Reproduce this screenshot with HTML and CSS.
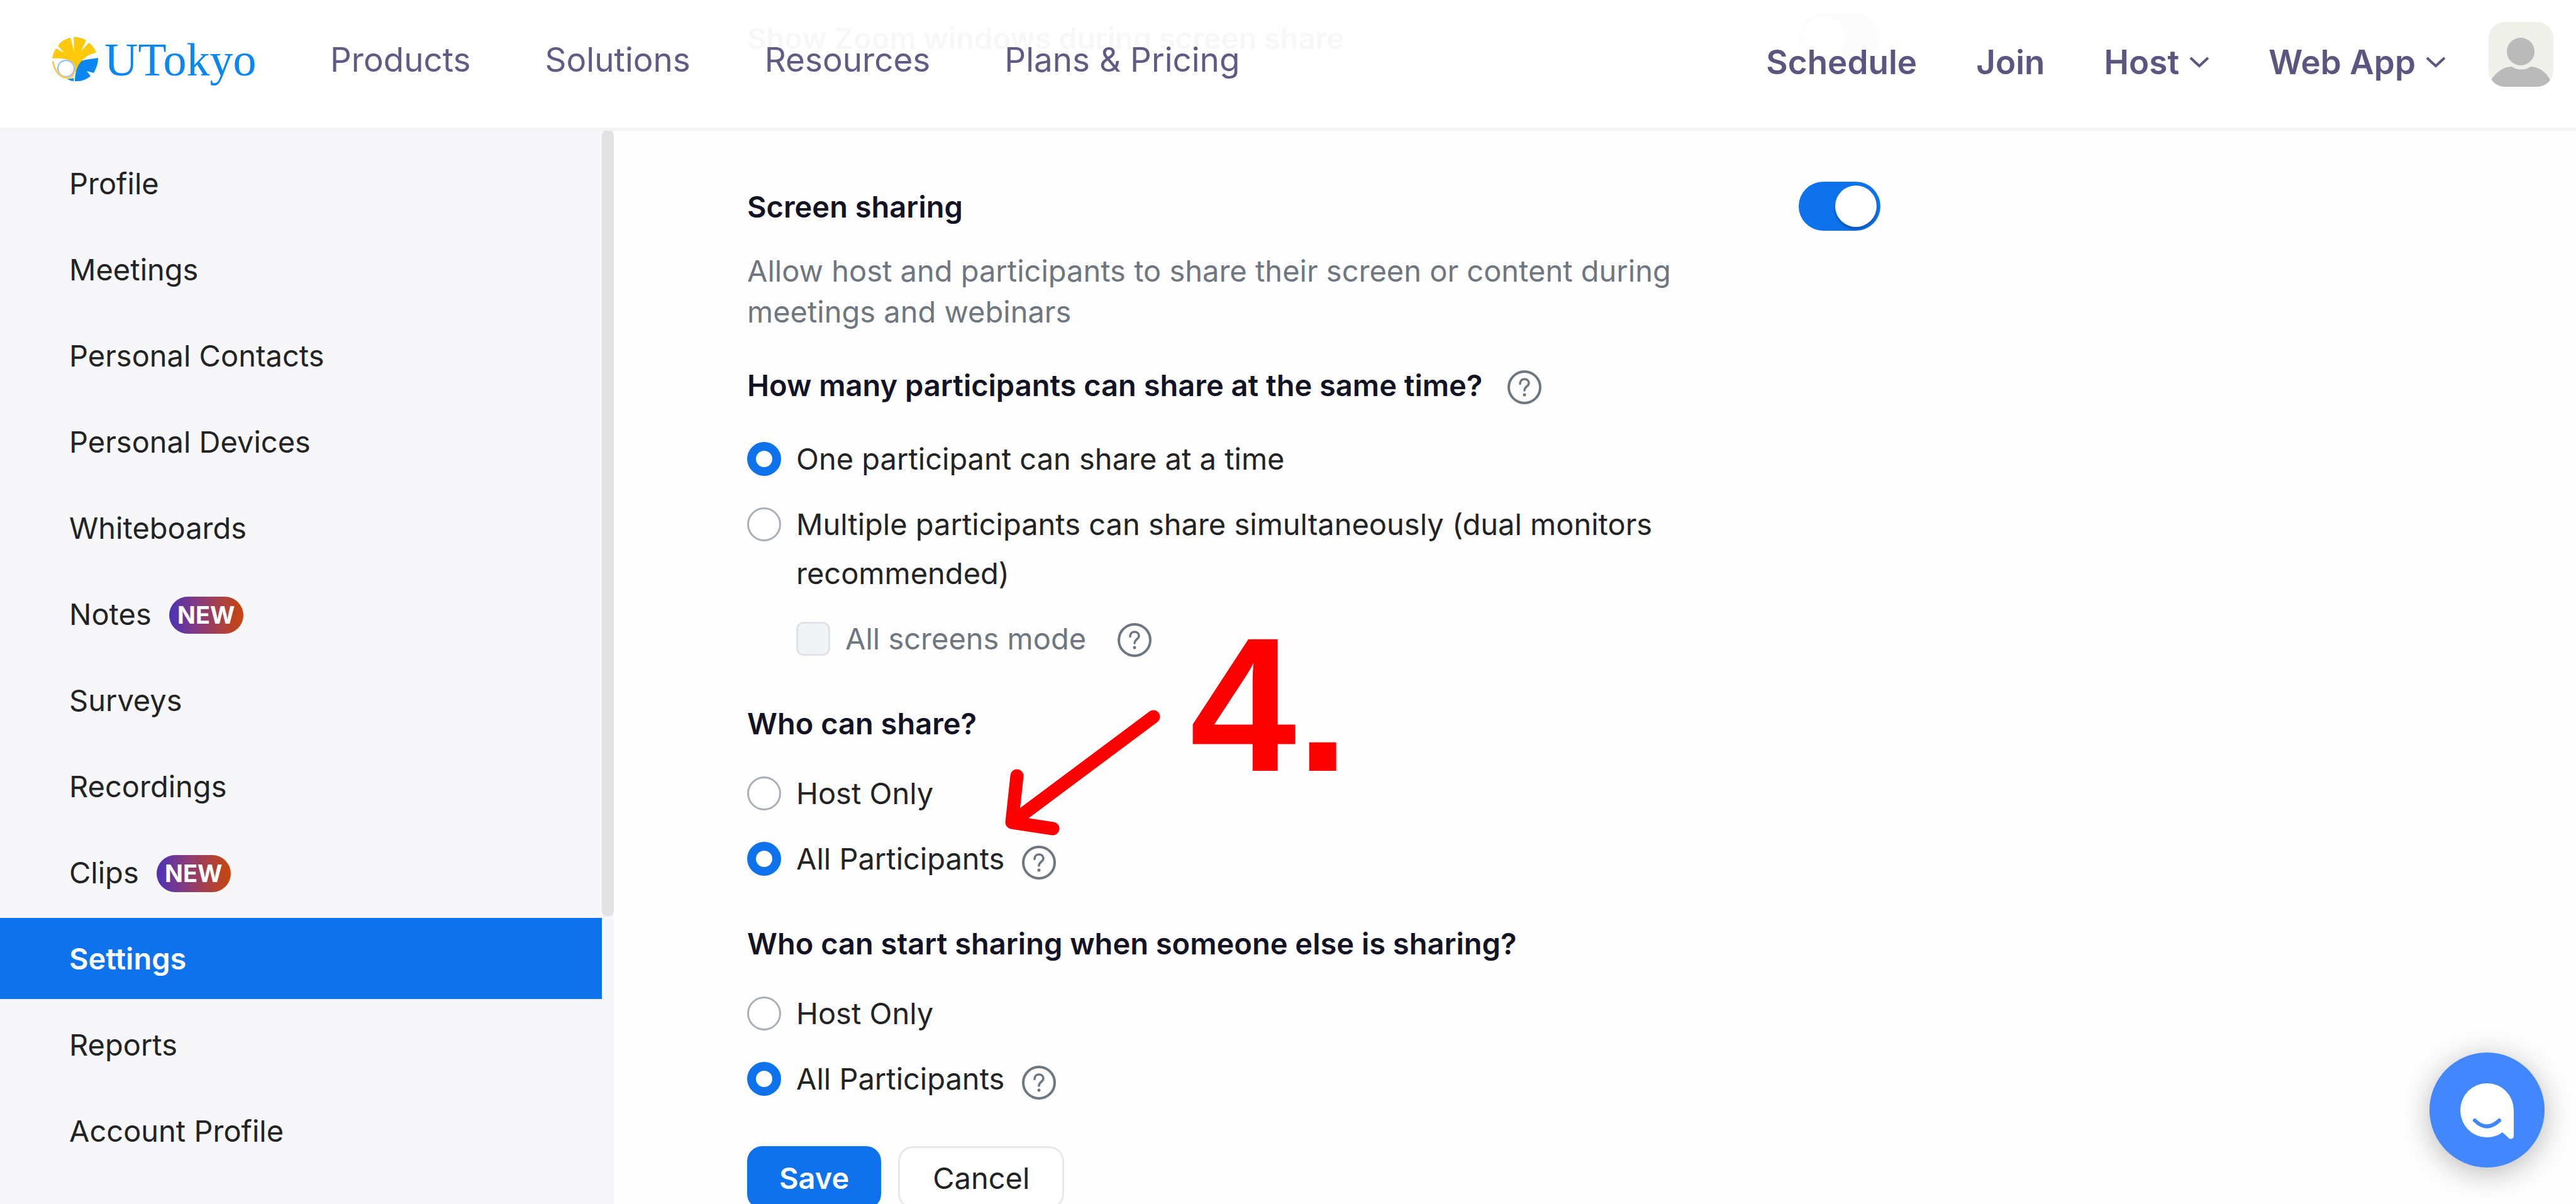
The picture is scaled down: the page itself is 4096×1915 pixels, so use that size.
FILE: index.html
```html
<!DOCTYPE html>
<html lang="en">
<head>
<meta charset="utf-8">
<meta name="viewport" content="width=device-width, initial-scale=1">
<title>Settings - Zoom</title>
<link rel="stylesheet" href="styles.css">
</head>
<body>
<svg class="symbols" aria-hidden="true">
  <symbol id="help" viewBox="0 0 54 54">
    <circle cx="27" cy="27" r="25" fill="none" stroke="currentColor" stroke-width="4"/>
    <path d="M20 21.500C20 16.500 23 14 27 14s7 2.500 7 6.500c0 5-7 5.500-7 11.500" fill="none" stroke="currentColor" stroke-width="3.500" stroke-linecap="round"/>
    <circle cx="27" cy="39" r="2.500" fill="currentColor"/>
  </symbol>
  <symbol id="chevron" viewBox="0 0 32 18">
    <path d="M2 2l14 13L30 2" fill="none" stroke="currentColor" stroke-width="4"/>
  </symbol>
</svg>

<header class="header">
  <a class="logo" href="#">
    <svg class="logo-mark" viewBox="0 0 73 71" aria-hidden="true">
      <path fill="#ffc80a" d="M34 57C37 51 37 46 33 41 28 35 16 33 0 34 1 28 3 22 6 18L19 25 9 14C14 7 20 3 29 1L35 24 34 0C42 0 49 2 54 5L46 22 58 9C64 13 68 19 70 25 55 27 47 36 43 46 41 51 39 54 34 57Z"/>
      <path fill="#0b87f2" d="M36 70C36 57 40 44 47 38 53 35 62 35 73 33 73 42 70 50 66 57L55 54 61 62C54 68 45 71 36 70ZM22 65C27 67 31 66 34 65L34 70C30 70 26 68 22 65Z"/>
      <circle cx="22" cy="50" r="13" fill="none" stroke="#8dbff0" stroke-width="2"/>
      <path d="M1 38C3 53 12 66 27 65 32 64 34 60 35 55" fill="none" stroke="#f3cf5a" stroke-width="3"/>
    </svg>
    <span class="logo-text">UTokyo</span>
  </a>
  <nav class="nav-main" aria-label="Main">
    <a href="#">Products</a>
    <a href="#">Solutions</a>
    <a href="#">Resources</a>
    <a href="#">Plans &amp; Pricing</a>
  </nav>
  <nav class="nav-user" aria-label="Account">
    <a href="#">Schedule</a>
    <a href="#">Join</a>
    <a href="#">Host<svg class="chevron" aria-hidden="true"><use href="#chevron"/></svg></a>
    <a href="#">Web App<svg class="chevron" aria-hidden="true"><use href="#chevron"/></svg></a>
  </nav>
  <button class="avatar" type="button" aria-label="Account">
    <svg viewBox="0 0 103 103" aria-hidden="true">
      <rect width="103" height="103" fill="#f0f0eb"/>
      <circle cx="51" cy="47" r="22" fill="#bababa"/>
      <path d="M3 94C10 82 22 71 37 71 46 77 58 77 67 71 82 71 93 82 99 94L94 103H8Z" fill="#bababa"/>
    </svg>
  </button>
</header>

<div class="layout">
  <aside class="sidebar">
    <nav class="menu" aria-label="Settings">
      <a href="#">Profile</a>
      <a href="#">Meetings</a>
      <a href="#">Personal Contacts</a>
      <a href="#">Personal Devices</a>
      <a href="#">Whiteboards</a>
      <a href="#">Notes <span class="badge">NEW</span></a>
      <a href="#">Surveys</a>
      <a href="#">Recordings</a>
      <a href="#">Clips <span class="badge">NEW</span></a>
      <a class="active" href="#" aria-current="page">Settings</a>
      <a href="#">Reports</a>
      <a href="#">Account Profile</a>
    </nav>
    <div class="scroll-track"><div class="scroll-thumb"></div></div>
  </aside>

  <main class="content">
    <section class="setting">
      <div class="setting-head">
        <label class="title" for="show-windows">Show Zoom windows during screen share</label>
        <input class="switch" type="checkbox" id="show-windows">
      </div>
    </section>

    <section class="setting">
      <div class="setting-head">
        <label class="title" for="screen-sharing">Screen sharing</label>
        <input class="switch" type="checkbox" id="screen-sharing" checked>
      </div>
      <p class="description">Allow host and participants to share their screen or content during meetings and webinars</p>

      <fieldset class="group count">
        <legend class="title">How many participants can share at the same time? <svg class="help" aria-hidden="true"><use href="#help"/></svg></legend>
        <div class="option">
          <input type="radio" name="count" id="count-one" checked>
          <label for="count-one">One participant can share at a time</label>
        </div>
        <div class="option">
          <input type="radio" name="count" id="count-many">
          <label for="count-many">Multiple participants can share simultaneously (dual monitors recommended)</label>
        </div>
        <div class="option nested">
          <input type="checkbox" id="all-screens" disabled>
          <label for="all-screens">All screens mode</label>
          <svg class="help" aria-hidden="true"><use href="#help"/></svg>
        </div>
      </fieldset>

      <fieldset class="group">
        <legend class="title">Who can share?</legend>
        <div class="option">
          <input type="radio" name="share" id="share-host">
          <label for="share-host">Host Only</label>
        </div>
        <div class="option">
          <input type="radio" name="share" id="share-all" checked>
          <label for="share-all">All Participants</label>
          <svg class="help" aria-hidden="true"><use href="#help"/></svg>
        </div>
      </fieldset>

      <fieldset class="group">
        <legend class="title">Who can start sharing when someone else is sharing?</legend>
        <div class="option">
          <input type="radio" name="start" id="start-host">
          <label for="start-host">Host Only</label>
        </div>
        <div class="option">
          <input type="radio" name="start" id="start-all" checked>
          <label for="start-all">All Participants</label>
          <svg class="help" aria-hidden="true"><use href="#help"/></svg>
        </div>
      </fieldset>

      <div class="actions">
        <button class="btn primary" type="button">Save</button>
        <button class="btn" type="button">Cancel</button>
      </div>
    </section>
  </main>
</div>

<svg class="arrow" viewBox="0 0 250 200" aria-hidden="true">
  <path d="M235 18L10 186L18 112M10 186L75 196" fill="none" stroke="#f00" stroke-width="21" stroke-linecap="round" stroke-linejoin="round"/>
</svg>
<div class="step">4.</div>

<button class="chat" type="button" aria-label="Chat">
  <svg viewBox="0 0 183 183" aria-hidden="true">
    <path d="M91 49A42 43 0 0 1 134 92V134Q132 139 127 137L116 127Q105 135 91 135A42 43 0 0 1 91 49Z" fill="#fff"/>
    <path d="M72 108Q91 127 111 108" fill="none" stroke="#4387ff" stroke-width="6" stroke-linecap="round"/>
  </svg>
</button>
</body>
</html>
```

FILE: styles.css
```css
* {
  box-sizing: border-box;
}

body {
  margin: 0;
  background: #fefefe;
  color: #222325;
  font-family: Inter, "Liberation Sans", sans-serif;
  font-size: 47px;
  overflow: hidden;
}

a {
  color: inherit;
  text-decoration: none;
}

button {
  font: inherit;
  color: inherit;
  border: 0;
  padding: 0;
  cursor: pointer;
}

.symbols {
  display: none;
}

/* Header */

.header {
  position: fixed;
  top: 0;
  left: 0;
  right: 0;
  z-index: 2;
  display: flex;
  align-items: center;
  height: 208px;
  padding: 0 36px 14px 83px;
  background: rgba(255, 255, 255, 0.97);
  border-bottom: 5px solid #f3f3f3;
}

.logo {
  display: flex;
  align-items: center;
  gap: 10px;
  width: 442px;
}

.logo-mark {
  width: 73px;
  height: 71px;
}

.logo-text {
  font-family: "Liberation Serif", serif;
  font-size: 74px;
  line-height: 80px;
  color: #0b87f2;
}

.nav-main {
  display: flex;
  gap: 118px;
  font-size: 53px;
  color: #5f5b85;
}

.nav-user {
  display: flex;
  gap: 94px;
  margin: 8px 68px 0 auto;
  font-size: 53px;
  font-weight: 600;
  color: #5a567f;
}

.nav-user a {
  display: flex;
  align-items: center;
  gap: 16px;
}

.chevron {
  width: 32px;
  height: 18px;
}

.avatar {
  width: 103px;
  height: 103px;
  margin-bottom: 16px;
  border-radius: 26px;
  overflow: hidden;
  background: none;
}

.avatar svg {
  display: block;
}

/* Layout */

.layout {
  display: flex;
  height: 100vh;
  overflow: hidden;
}

.sidebar {
  display: flex;
  flex: none;
  width: 976px;
  padding-top: 206px;
  background: #f7f7fa;
}

.menu {
  display: flex;
  flex: 1;
  flex-direction: column;
  gap: 8px;
  padding-top: 21px;
  font-size: 47px;
}

.menu a {
  display: flex;
  flex: none;
  align-items: center;
  gap: 28px;
  height: 129px;
  padding-left: 110px;
}

.menu .active {
  background: #0e72ed;
  color: #fff;
  font-weight: 600;
}

.badge {
  width: 118px;
  margin-top: 4px;
  border-radius: 30px;
  background: linear-gradient(90deg, #4d32b8, #8f3c72 45%, #c9460c);
  color: #fff;
  font-size: 38px;
  font-weight: 700;
  line-height: 59px;
  text-align: center;
}

.scroll-track {
  flex: none;
  width: 19px;
}

.scroll-thumb {
  height: 1252px;
  border-radius: 10px;
  background: #e2e2e2;
}

/* Content */

.content {
  flex: 1;
  padding: 21px 0 0 212px;
}

.setting {
  max-width: 1802px;
  margin-bottom: 190px;
}

.setting-head {
  display: flex;
  align-items: center;
  justify-content: space-between;
}

.title {
  color: #131326;
  font-weight: 600;
}

.switch {
  appearance: none;
  width: 130px;
  height: 78px;
  margin: 0;
  padding: 6px;
  border-radius: 39px;
  background: #8fa39b;
}

.switch::before {
  content: "";
  display: block;
  width: 66px;
  height: 66px;
  border-radius: 50%;
  background: #fff;
}

.switch:checked {
  background: #0e72ed;
}

.switch:checked::before {
  margin-left: auto;
  box-shadow: 0 4px 4px rgba(0, 0, 0, 0.25);
}

.description {
  max-width: 1560px;
  margin: 31px 0 57px;
  color: #6e7680;
  line-height: 65px;
}

.group {
  display: flex;
  flex-direction: column;
  gap: 26px;
  max-width: 1560px;
  margin: 0 0 68px;
  padding: 0;
  border: 0;
}

.group legend {
  display: flex;
  align-items: center;
  gap: 40px;
  height: 54px;
  margin-bottom: 46px;
  padding: 0;
}

.count legend {
  margin-bottom: 52px;
}

.option {
  display: flex;
  gap: 24px;
  line-height: 78px;
}

.option input {
  appearance: none;
  flex: none;
  width: 54px;
  height: 54px;
  margin: 12px 0;
  border: 3px solid #a9aeb8;
  border-radius: 50%;
  background: #fff;
}

.option input:checked {
  border: 14px solid #0e72ed;
}

.option.nested {
  padding-left: 78px;
  color: #6e7680;
}

.option.nested input {
  border-color: #dfe3e8;
  border-radius: 12px;
  background: #f0f4f7;
}

.help {
  flex: none;
  width: 54px;
  height: 54px;
  margin-top: 8px;
  color: #6e7680;
}

.option .help {
  margin: 18px 0 0 4px;
}

.nested .help {
  margin: 14px 0 0 26px;
}

.actions {
  display: flex;
  gap: 27px;
}

.btn {
  height: 100px;
  padding: 0 52px;
  border: 3px solid #e6e8ee;
  border-radius: 24px;
  background: #fff;
}

.btn.primary {
  padding: 0 48px;
  border-color: #0e72ed;
  background: #0e72ed;
  color: #fff;
  font-weight: 600;
}

/* Annotation drawn over the page */

.arrow {
  position: absolute;
  top: 1122px;
  left: 1599px;
  width: 250px;
  height: 200px;
  overflow: visible;
}

.step {
  position: absolute;
  top: 948px;
  left: 1892px;
  color: #f00;
  font-family: "Liberation Sans", sans-serif;
  font-size: 304px;
  font-weight: 700;
  line-height: 345px;
}

/* Chat launcher */

.chat {
  position: fixed;
  right: 50px;
  bottom: 58px;
  width: 183px;
  height: 183px;
  border-radius: 50%;
  background: #4387ff;
  box-shadow: 0 8px 48px rgba(0, 0, 0, 0.28);
}

.chat svg {
  display: block;
}
```
